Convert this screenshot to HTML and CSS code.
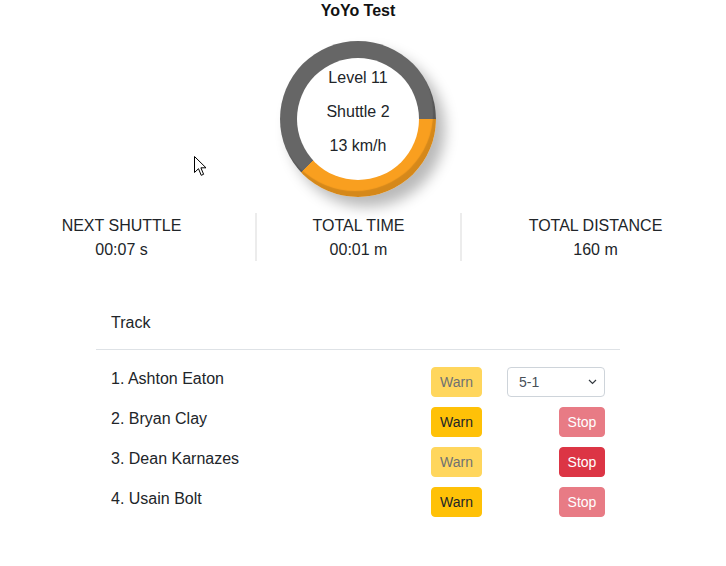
FILE: index.html
```html
<!DOCTYPE html>
<html>
<head>
<meta charset="utf-8">
<title>YoYo Test</title>
<link rel="stylesheet" href="styles.css">
</head>
<body>
<div class="page">
  <h1 class="title">YoYo Test</h1>
  <div class="gauge">
    <div class="gauge-inner">
      <div class="gauge-line">Level 11</div>
      <div class="gauge-line">Shuttle 2</div>
      <div class="gauge-line">13 km/h</div>
    </div>
  </div>
  <div class="stats">
    <div class="stat"><div>NEXT SHUTTLE</div><div>00:07 s</div></div>
    <div class="stat stat-center"><div class="stat-mid"><div>TOTAL TIME</div><div>00:01 m</div></div></div>
    <div class="stat"><div>TOTAL DISTANCE</div><div>160 m</div></div>
  </div>
  <div class="track">
    <div class="track-head">Track</div>
    <div class="track-rows">
      <div class="row">
        <div class="name">1. Ashton Eaton</div>
        <button class="btn btn-warn disabled">Warn</button>
        <div class="action">
          <div class="select"><span>5-1</span>
            <svg width="9" height="6" viewBox="0 0 9 6"><path d="M1 1l3.5 3.5L8 1" fill="none" stroke="#343a40" stroke-width="1.2"/></svg>
          </div>
        </div>
      </div>
      <div class="row">
        <div class="name">2. Bryan Clay</div>
        <button class="btn btn-warn">Warn</button>
        <div class="action"><button class="btn btn-stop disabled">Stop</button></div>
      </div>
      <div class="row">
        <div class="name">3. Dean Karnazes</div>
        <button class="btn btn-warn disabled">Warn</button>
        <div class="action"><button class="btn btn-stop">Stop</button></div>
      </div>
      <div class="row">
        <div class="name">4. Usain Bolt</div>
        <button class="btn btn-warn">Warn</button>
        <div class="action"><button class="btn btn-stop disabled">Stop</button></div>
      </div>
    </div>
  </div>
</div>
<svg class="cursor" width="13" height="21" viewBox="0 0 13 21"><path d="M0.5 0.5 L0.5 16.5 L4.5 12.7 L7.2 19.3 L9.6 18.3 L6.9 11.8 L12 11.8 Z" fill="#fff" stroke="#000" stroke-width="1" stroke-linejoin="miter"/></svg>
</body>
</html>
```
FILE: styles.css
```css
html, body {
  margin: 0;
  padding: 0;
  background: #fff;
}
body {
  font-family: "Liberation Sans", Arial, sans-serif;
  font-size: 16px;
  color: #212529;
  position: relative;
}
.page {
  width: 716px;
}
.title {
  margin: 0;
  font-size: 16px;
  font-weight: bold;
  line-height: 22px;
  text-align: center;
  color: #111;
}
.gauge {
  width: 156px;
  height: 156px;
  margin: 19px auto 0;
  border-radius: 50%;
  background: conic-gradient(#666 0deg 90deg, #f99f1f 90deg 227deg, #666 227deg 360deg);
  box-shadow: inset -3px -6px 1px rgba(0, 0, 0, 0.14), 9px 10px 14px rgba(0, 0, 0, 0.28);
  display: flex;
  align-items: center;
  justify-content: center;
}
.gauge-inner {
  width: 122px;
  height: 122px;
  border-radius: 50%;
  background: #fff;
  text-align: center;
  box-sizing: border-box;
  padding-top: 3px;
}
.gauge-line {
  line-height: 34px;
}
.stats {
  margin: 16px 2px 0 3px;
  display: grid;
  grid-template-columns: 1fr 1fr 1fr;
  text-align: center;
  line-height: 24px;
}
.stat {
  padding-top: 1px;
}
.stat-center {
  padding-top: 0;
}
.stat-mid {
  width: 207px;
  height: 48px;
  box-sizing: border-box;
  padding-top: 1px;
  margin: 0 auto;
  border-left: 2px solid #ececec;
  border-right: 2px solid #ececec;
}
.track {
  width: 524px;
  margin: 34px auto 0;
}
.track-head {
  padding: 15px 15px 14px;
  line-height: 24px;
  border-bottom: 1px solid #dee2e6;
}
.track-rows {
  padding: 17px 15px 0;
  display: flex;
  flex-direction: column;
  gap: 10px;
}
.row {
  display: flex;
  align-items: flex-start;
  gap: 25px;
  height: 30px;
}
.name {
  flex: 1;
  line-height: 22px;
  padding-top: 1px;
}
.btn {
  font-family: "Liberation Sans", Arial, sans-serif;
  font-size: 14px;
  height: 30px;
  border: 1px solid transparent;
  border-radius: 4px;
  padding: 0;
  line-height: 28px;
  margin: 0;
  cursor: pointer;
  text-align: center;
}
.btn-warn {
  width: 51px;
  background: #ffc107;
  border-color: #ffc107;
  color: #212529;
}
.btn-stop {
  width: 46px;
  background: #dc3545;
  border-color: #dc3545;
  color: #fff;
}
.disabled {
  opacity: 0.65;
}
.action {
  width: 98px;
  display: flex;
  justify-content: flex-end;
}
.select {
  width: 98px;
  height: 30px;
  box-sizing: border-box;
  border: 1px solid #ced4da;
  border-radius: 4px;
  display: flex;
  align-items: center;
  justify-content: space-between;
  padding: 0 7px 0 11px;
  font-size: 14px;
  color: #495057;
}
.cursor {
  position: absolute;
  left: 194px;
  top: 156px;
}
```
